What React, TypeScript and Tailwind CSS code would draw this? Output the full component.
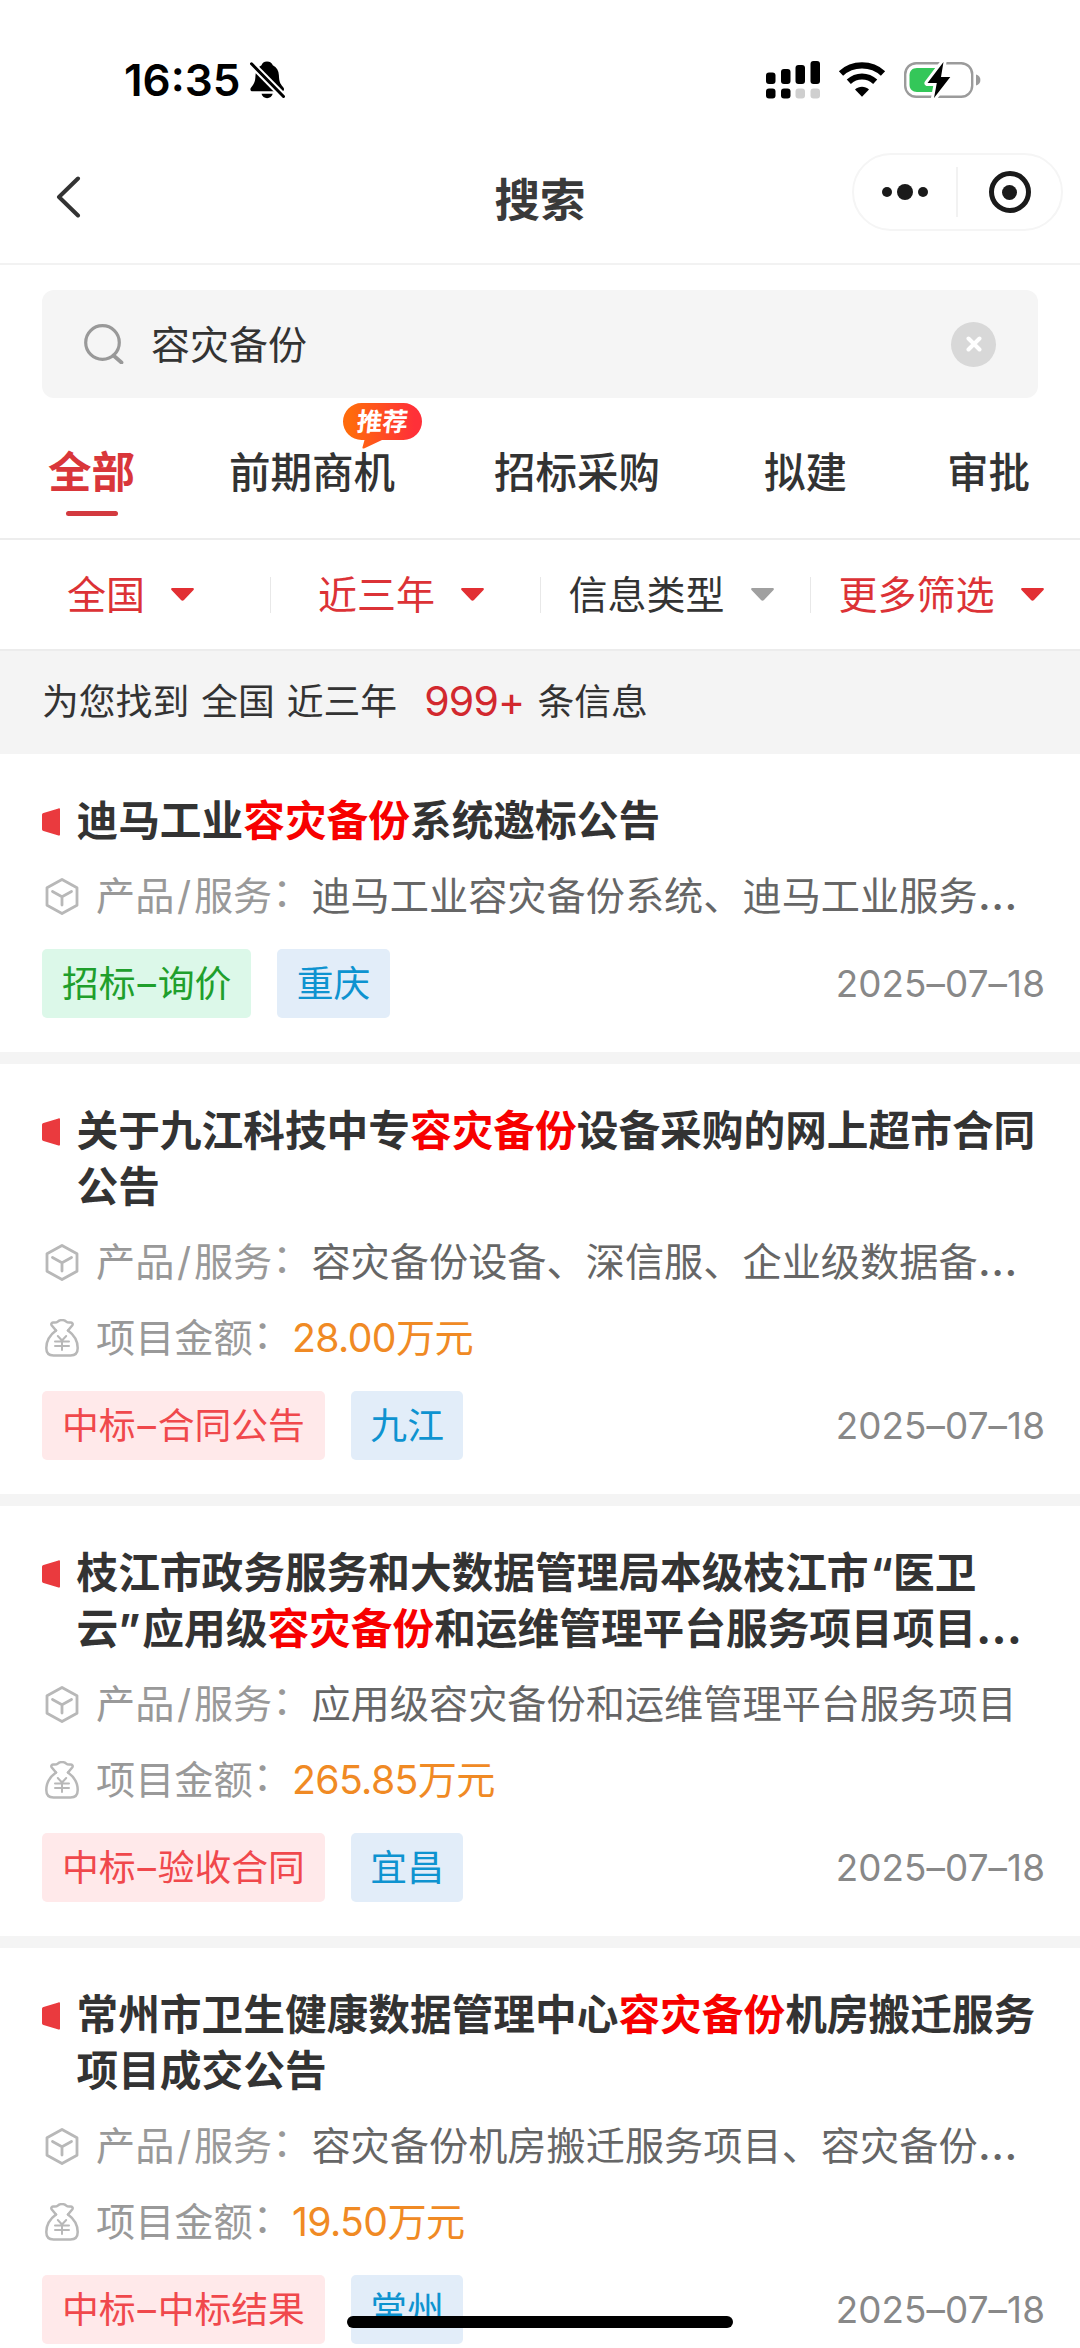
import { Fragment } from "react";
import clsx from "clsx";

const KEYWORD = "容灾备份";

type Notice = {
  title: string[];
  product: string;
  amount?: string;
  stage: string;
  tone: "green" | "red";
  city: string;
  date: string;
};

const tabs = [
  { label: "全部", className: "ml-[48px]", active: true },
  { label: "前期商机", className: "ml-[94px]", badge: "推荐" },
  { label: "招标采购", className: "ml-[99px]" },
  { label: "拟建", className: "ml-[104px]" },
  { label: "审批", className: "ml-[100px]" },
];

const filters = [
  { label: "全国", active: true },
  { label: "近三年", active: true },
  { label: "信息类型", active: false },
  { label: "更多筛选", active: true },
];

const notices: Notice[] = [
  {
    title: ["迪马工业容灾备份系统邀标公告"],
    product: "迪马工业容灾备份系统、迪马工业服务…",
    stage: "招标–询价",
    tone: "green",
    city: "重庆",
    date: "2025–07–18",
  },
  {
    title: ["关于九江科技中专容灾备份设备采购的网上超市合同", "公告"],
    product: "容灾备份设备、深信服、企业级数据备…",
    amount: "28.00万元",
    stage: "中标–合同公告",
    tone: "red",
    city: "九江",
    date: "2025–07–18",
  },
  {
    title: ["枝江市政务服务和大数据管理局本级枝江市“医卫", "云”应用级容灾备份和运维管理平台服务项目项目…"],
    product: "应用级容灾备份和运维管理平台服务项目",
    amount: "265.85万元",
    stage: "中标–验收合同",
    tone: "red",
    city: "宜昌",
    date: "2025–07–18",
  },
  {
    title: ["常州市卫生健康数据管理中心容灾备份机房搬迁服务", "项目成交公告"],
    product: "容灾备份机房搬迁服务项目、容灾备份…",
    amount: "19.50万元",
    stage: "中标–中标结果",
    tone: "red",
    city: "常州",
    date: "2025–07–18",
  },
];

const BellOffIcon = () => (
  <svg width="35" height="38" viewBox="0 0 35 38" fill="none">
    <path
      d="M17 0.5c3 0 5 1.6 5.8 3.8 3.9 1.8 5.9 5.4 6.1 10 .2 6 1.2 8.500 4.100 11.700.9 1 1 1.500 1 2.500 0 1.200-.9 1.800-2.200 1.800H2.500C1.200 30.300.4 29.700.4 28.500c0-1 .2-1.600 1.100-2.600 2.900-3.200 3.800-5.600 4-11.600.2-4.600 2.200-8.200 6-10C12.200 2.100 14 .5 17 .5Z"
      fill="#000"
    />
    <path d="M11.500 32.800h11.200c-.6 2.700-2.900 4.400-5.600 4.400s-5-1.700-5.600-4.400Z" fill="#000" />
    <path d="M1.500 3 33.500 35.500" stroke="#fff" strokeWidth="7" />
    <path d="M1.500 2.800 33.500 35.500" stroke="#000" strokeWidth="3" strokeLinecap="round" />
  </svg>
);

const SignalIcon = () => (
  <svg width="54" height="38" viewBox="0 0 54 38">
    <rect x="0" y="11.500" width="9.500" height="11.500" rx="3" />
    <rect x="15" y="8" width="9.500" height="15" rx="3" />
    <rect x="29.500" y="4" width="9.500" height="19" rx="3" />
    <rect x="44.500" y="0" width="9.500" height="23" rx="3" />
    <rect x="0" y="27.500" width="9.500" height="10" rx="3" />
    <rect x="15" y="27.500" width="9.500" height="10" rx="3" />
    <rect x="29.500" y="27.500" width="9.500" height="10" rx="3" fill="#cfcfcf" />
    <rect x="44.500" y="27.500" width="9.500" height="10" rx="3" fill="#cfcfcf" />
  </svg>
);

const WifiIcon = () => (
  <svg width="48" height="36" viewBox="0 0 48 36" fill="none">
    <path d="M3 11.500C14.500.7 33.500.7 45 11.500" stroke="#000" strokeWidth="6.200" />
    <path d="M10.800 19.800c7.600-7 18.800-7 26.400 0" stroke="#000" strokeWidth="6" />
    <path d="M24 34.800 17 27.400c4-3.600 10-3.600 14 0L24 34.800Z" fill="#000" />
  </svg>
);

const BatteryIcon = () => (
  <svg width="77" height="38" viewBox="0 0 77 38" fill="none">
    <rect x="1.200" y="2.200" width="67" height="33.600" rx="11" stroke="#9b9b9b" strokeWidth="2.400" />
    <path d="M13 7h18v24H13c-4.500 0-7.500-2.800-7.500-7.200V14.200C5.500 9.800 8.500 7 13 7Z" fill="#34c759" />
    <path d="M72 13.500c2.800.6 4.400 2.800 4.400 5.500S74.800 23.900 72 24.500v-11Z" fill="#9b9b9b" />
    <path
      d="M39.500 1 23.500 22h9.300L30 37l16.300-21H37L39.500 1Z"
      fill="#000"
      stroke="#fff"
      strokeWidth="6"
      strokeLinejoin="round"
      paintOrder="stroke"
    />
  </svg>
);

const SearchIcon = () => (
  <svg width="40" height="40" viewBox="0 0 40 40" fill="none" stroke="#999" strokeWidth="3.200">
    <circle cx="18.500" cy="18.500" r="16.800" />
    <path d="m29.500 31.500 8 7" strokeWidth="3.800" strokeLinecap="round" />
  </svg>
);

const BoxIcon = () => (
  <svg width="34" height="37" viewBox="0 0 34 37" fill="none" stroke="#b8b8b8" strokeWidth="2.800" strokeLinejoin="round" strokeLinecap="round">
    <path d="M17 1.500 32 9.800v17.400L17 35.500 2 27.200V9.800L17 1.500Z" />
    <path d="m7.500 13.500 9.500 5.300 9.500-5.300M17 18.800v8.200" />
  </svg>
);

const MoneyBagIcon = () => (
  <svg width="34" height="38" viewBox="0 0 34 38" fill="none" stroke="#b8b8b8" strokeWidth="2.500" strokeLinejoin="round" strokeLinecap="round">
    <path d="M11 11.500 6.600 6.200C5.800 4.800 7 3.300 8.600 3.500c1.700.2 3 .2 4.200-.9 1.300-1.200 2.700-1.500 4.200-1.500s2.900.3 4.200 1.500c1.200 1.100 2.500 1.100 4.200.9 1.600-.2 2.800 1.300 2 2.700L23 11.500" />
    <path d="M11 11.500C5.500 15.500 1.300 22 1.300 29c0 5 2.500 7.500 7.200 7.500h17c4.700 0 7.200-2.500 7.200-7.500 0-7-4.200-13.500-9.700-17.500" />
    <path d="m12.800 17 4.200 4.500 4.200-4.500M10 22.500h14M10 27h14M17 21.500V31" strokeWidth="2" />
  </svg>
);

const Caret = ({ active }: { active: boolean }) => (
  <svg width="23" height="13" viewBox="0 0 23 13" fill={active ? "#e22f33" : "#a0a0a0"}>
    <path d="M1.500 0h20c1.300 0 1.800 1 1 2L13 12c-.9 1-2.100 1-3 0L.5 2C-.3 1 .2 0 1.500 0Z" />
  </svg>
);

const punctuation: Record<string, string> = {
  "…": "text-[46px] leading-none",
  "–": "inline-block w-[0.600em] text-center",
  "“": "ml-[2px]",
  "”": "mr-[2px]",
  "：": "inline-block -translate-y-[4px]",
};

const Spaced = ({ text }: { text: string }) => (
  <>
    {text.split(/([…–“”：])/).map((part, i) =>
      punctuation[part] ? (
        <span key={i} className={punctuation[part]}>
          {part}
        </span>
      ) : (
        part
      )
    )}
  </>
);

const Highlight = ({ text }: { text: string }) => (
  <>
    {text.split(KEYWORD).map((part, i) => (
      <Fragment key={i}>
        {i > 0 && <em className="not-italic text-[#f70000]">{KEYWORD}</em>}
        <Spaced text={part} />
      </Fragment>
    ))}
  </>
);

const StatusBar = () => (
  <div className="flex h-[153px] items-center pt-[6px]">
    <span className="ml-[124px] w-[126px] pt-[1px] text-[44px] font-semibold text-black">16:35</span>
    <BellOffIcon />
    <div className="ml-auto mr-[99px] flex items-center">
      <SignalIcon />
      <div className="ml-[18px]">
        <WifiIcon />
      </div>
      <div className="ml-[18px]">
        <BatteryIcon />
      </div>
    </div>
  </div>
);

const NavBar = () => (
  <div className="flex h-[112px] items-start justify-between border-b-2 border-[#f2f2f2] pl-[56px] pr-[17px]">
    <div className="w-[211px] pt-[23px]">
      <svg width="25" height="42" viewBox="0 0 25 42" fill="none" stroke="#333" strokeWidth="4" strokeLinecap="round" strokeLinejoin="round">
        <path d="M22 2.500 3 21l19 18.500" />
      </svg>
    </div>
    <h1 className="mr-[39px] pt-[16px] text-[45.500px] font-bold leading-[64px] text-[#3a3a3a]">搜索</h1>
    <div className="flex h-[78px] w-[211px] items-center rounded-full border-2 border-[#f5f5f5]">
      <div className="flex flex-1 items-center justify-center gap-[5px]">
        <i className="size-[10px] rounded-full bg-[#1a1a1a]" />
        <i className="size-[16px] rounded-full bg-[#1a1a1a]" />
        <i className="size-[10px] rounded-full bg-[#1a1a1a]" />
      </div>
      <div className="h-[50px] w-[2px] bg-[#f2f2f2]" />
      <div className="flex flex-1 items-center justify-center">
        <div className="flex size-[42px] items-center justify-center rounded-full border-[5px] border-[#1a1a1a]">
          <i className="size-[15px] rounded-full bg-[#1a1a1a]" />
        </div>
      </div>
    </div>
  </div>
);

const SearchBox = () => (
  <div className="px-[42px] pt-[25px]">
    <div className="flex h-[108px] items-center rounded-[12px] bg-[#f5f5f5] pl-[42px] pr-[42px]">
      <SearchIcon />
      <span className="ml-[27px] flex-1 pt-[2px] text-[39px] leading-[56px] text-[#333]">{KEYWORD}</span>
      <div className="flex size-[45px] items-center justify-center rounded-full bg-[#d8d8d8]">
        <svg width="16" height="16" viewBox="0 0 16 16" stroke="#fff" strokeWidth="4" strokeLinecap="round">
          <path d="m2.500 2.500 11 11M13.500 2.500l-11 11" />
        </svg>
      </div>
    </div>
  </div>
);

const RecommendBadge = ({ text }: { text: string }) => (
  <div className="absolute left-[114px] top-[-39px] h-[46px] w-[79px]">
    <svg className="absolute inset-0" width="79" height="46" viewBox="0 0 79 46">
      <defs>
        <linearGradient id="badge" x1="0" x2="1" y1="0" y2="0">
          <stop offset="0.100" stopColor="#ff6a0c" />
          <stop offset="0.900" stopColor="#ff3038" />
        </linearGradient>
      </defs>
      <path d="M18.500 0h42a18.500 18.500 0 0 1 0 37H39L21 45.500c-1 .4-1.800-.3-1.500-1.300l2-7.200h-3a18.500 18.500 0 0 1 0-37Z" fill="url(#badge)" />
    </svg>
    <span className="relative block -skew-x-6 pt-[1px] text-center text-[25.500px] font-bold leading-[36px] text-white">{text}</span>
  </div>
);

const Tabs = () => (
  <div className="flex h-[142px] items-start border-b-2 border-[#ededed] pt-[44px]">
    {tabs.map((tab) => (
      <div key={tab.label} className={clsx("relative flex flex-col items-center", tab.className)}>
        <span
          className={clsx(
            "whitespace-nowrap",
            tab.active
              ? "text-[43.500px] font-bold leading-[60px] text-[#d9363a]"
              : "text-[41.500px] font-medium leading-[62px] text-[#333]"
          )}
        >
          {tab.label}
        </span>
        {tab.active && <div className="mt-[9px] h-[5px] w-[52px] rounded-full bg-[#d33a3f]" />}
        {tab.badge && <RecommendBadge text={tab.badge} />}
      </div>
    ))}
  </div>
);

const Filters = () => (
  <div className="grid h-[109px] grid-cols-4 items-center">
    {filters.map((filter, i) => (
      <div
        key={filter.label}
        className={clsx("flex h-[36px] items-center justify-center gap-[26px] pr-[9px]", i > 0 && "border-l border-[#e8e8e8]")}
      >
        <span className={clsx("whitespace-nowrap text-[39px] leading-[56px]", filter.active ? "text-[#dc3236]" : "text-[#333]")}>
          {filter.label}
        </span>
        <Caret active={filter.active} />
      </div>
    ))}
  </div>
);

const ResultCount = () => (
  <div className="flex h-[105px] items-center border-t-2 border-[#ececec] bg-[#f4f4f4] pb-[2px] pl-[42px] text-[36.800px] text-[#333]">
    <span>为您找到</span>
    <span className="ml-[12px]">全国</span>
    <span className="ml-[12px]">近三年</span>
    <span className="ml-[27px] pt-[1px] text-[41px] tracking-[-0.800px] text-[#d2282e]">999+</span>
    <span className="ml-[13px]">条信息</span>
  </div>
);

const NoticeCard = ({ notice }: { notice: Notice }) => (
  <article className="bg-white pb-[34px] pl-[42px] pr-[35px] pt-[39px]">
    <div className="flex">
      <svg className="mt-[15px]" width="18" height="28" viewBox="0 0 18 28">
        <path d="M1.500 5 16.500.4c.9-.3 1.500.2 1.500 1v25.200c0 .8-.6 1.300-1.500 1L1.500 23C.5 22.700 0 22 0 21V7c0-1 .5-1.700 1.500-2Z" fill="#ea3a3e" />
      </svg>
      <h2 className="ml-[16.500px] whitespace-nowrap text-[41.700px] font-bold leading-[56px] text-[#333]">
        {notice.title.map((line) => (
          <span key={line} className="block h-[56px]">
            <Highlight text={line} />
          </span>
        ))}
      </h2>
    </div>

    <div className="mt-[9px] text-[39.200px] text-[#999]">
      <div className="flex h-[76px] items-center whitespace-nowrap">
        <div className="ml-[2.500px] mr-[17.500px]">
          <BoxIcon />
        </div>
        <span>
          产品<span className="inline-block w-[19.500px] text-center">/</span>
          <Spaced text="服务：" />
        </span>
        <span className="text-[#666]">
          <Spaced text={notice.product} />
        </span>
      </div>
      {notice.amount && (
        <div className="flex h-[76px] items-center whitespace-nowrap">
          <div className="ml-[2.500px] mr-[17.500px]">
            <MoneyBagIcon />
          </div>
          <span>
            <Spaced text="项目金额：" />
          </span>
          <span className="tracking-[-0.600px] text-[#f08a24]">{notice.amount}</span>
        </div>
      )}
    </div>

    <div className="mt-[15px] flex h-[69px] items-center text-[36.800px]">
      <span
        className={clsx(
          "h-full whitespace-nowrap rounded-[5px] px-[20px] leading-[69px]",
          notice.tone === "green" ? "bg-[#dcf8e9] text-[#1f9f2c]" : "bg-[#ffe9ea] text-[#f0484c]"
        )}
      >
        <Spaced text={notice.stage} />
      </span>
      <span className="ml-[26px] h-full rounded-[5px] bg-[#e2edf9] px-[19.500px] leading-[69px] text-[#0e93d0]">{notice.city}</span>
      <time className="ml-auto tracking-[0.100px] text-[#888]">{notice.date}</time>
    </div>
  </article>
);

export default function App() {
  return (
    <div className="relative h-[2348px] w-[1080px] overflow-hidden bg-white font-['Inter','Noto_Sans_CJK_SC',sans-serif]">
      <StatusBar />
      <NavBar />
      <SearchBox />
      <Tabs />
      <Filters />
      <ResultCount />
      <main className="flex flex-col gap-[12px] bg-[#f4f4f4]">
        {notices.map((notice) => (
          <NoticeCard key={notice.title[0]} notice={notice} />
        ))}
      </main>
      {/* Home indicator */}
      <div className="absolute bottom-[20px] left-[347px] h-[12px] w-[386px] rounded-full bg-black" />
    </div>
  );
}
